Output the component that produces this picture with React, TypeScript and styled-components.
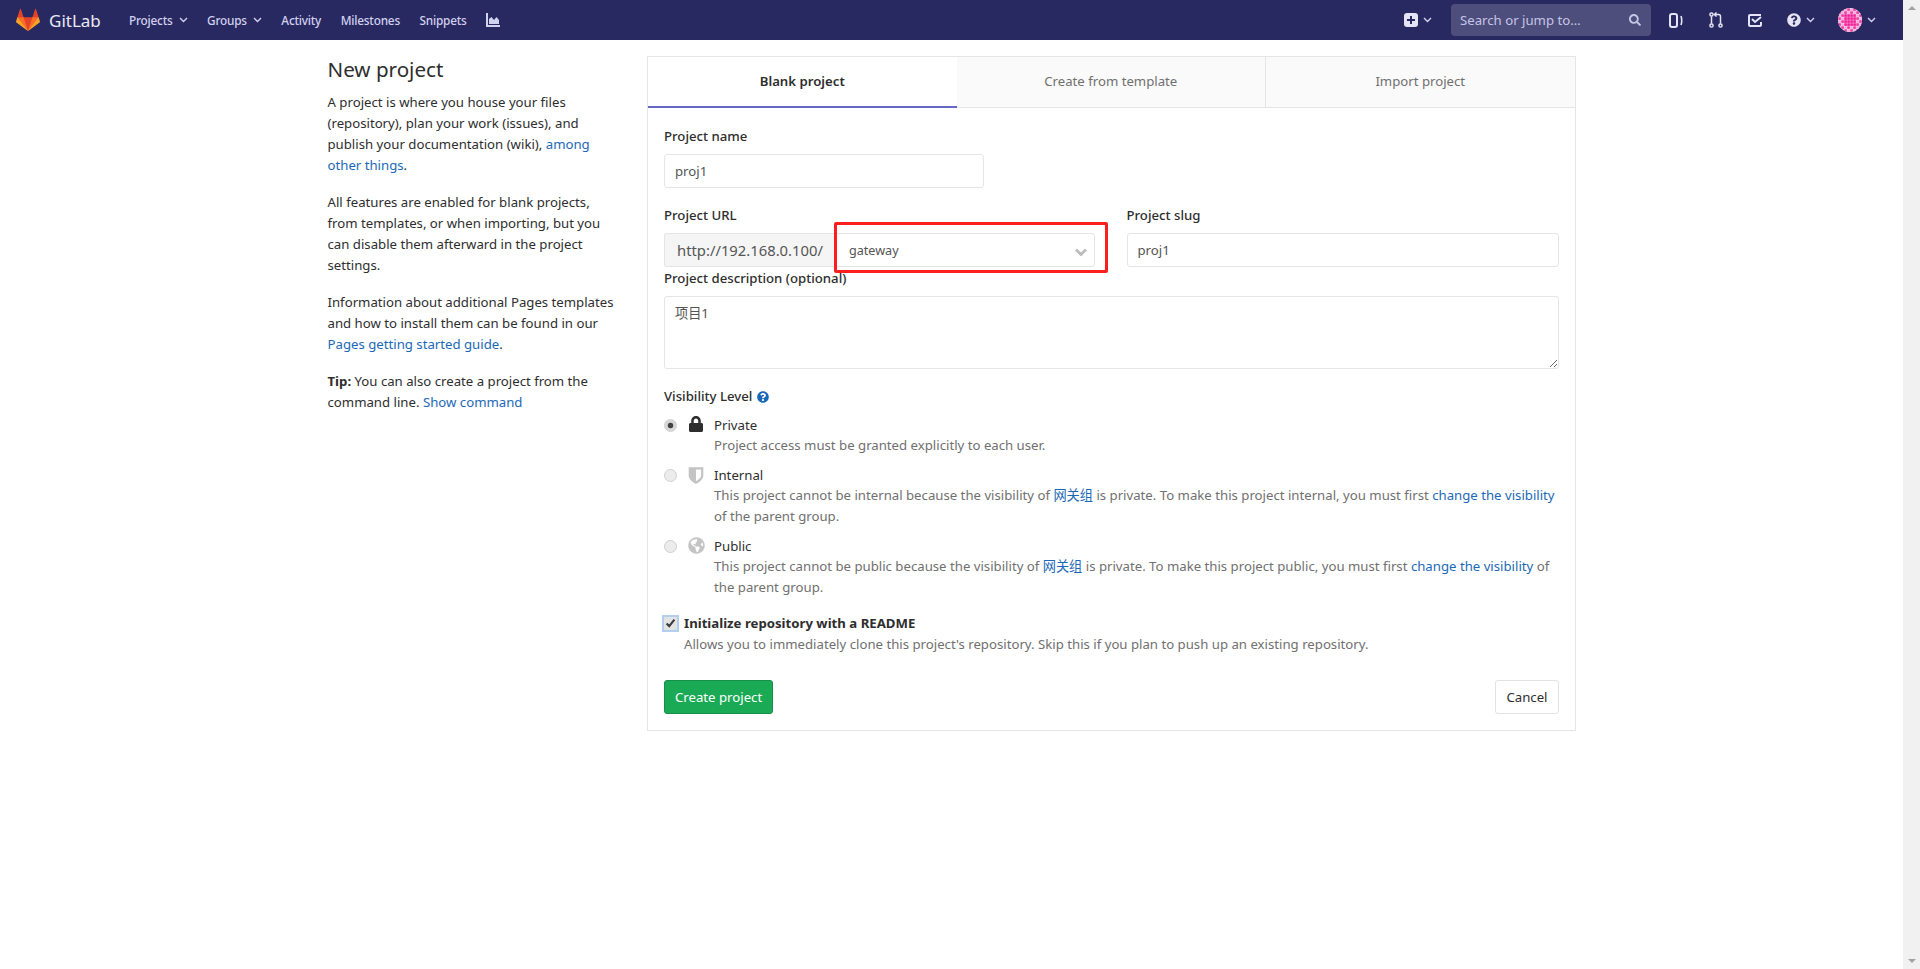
import styled, { createGlobalStyle } from "styled-components";
import { FaGlobeAmericas, FaLock, FaQuestionCircle, FaSearch } from "react-icons/fa";

const GlobalStyle = createGlobalStyle`
    html, body {
        margin: 0;
        padding: 0;
        background: #fff;
    }
    body {
        font-family: "Noto Sans", "Noto Sans CJK SC", sans-serif;
        font-size: 13.2px;
        color: #2e2e2e;
    }
    * {
        box-sizing: border-box;
    }
`;

const Shell = styled.div`
    display: flex;
    height: 969px;
    overflow: hidden;
`;

const Main = styled.div`
    flex: 1;
    min-width: 0;
`;

const ScrollRail = styled.div`
    width: 17px;
    background: #f1f1f1;
    display: flex;
    flex-direction: column;
    justify-content: space-between;
    align-items: center;
    padding: 6px 0;
`;

const ArrowUp = styled.div`
    width: 0;
    height: 0;
    border-left: 4px solid transparent;
    border-right: 4px solid transparent;
    border-bottom: 4px solid #a3a3a3;
`;

const ArrowDown = styled.div`
    width: 0;
    height: 0;
    border-left: 4px solid transparent;
    border-right: 4px solid transparent;
    border-top: 4px solid #a3a3a3;
`;

const Navbar = styled.header`
    height: 40px;
    background: #292961;
    display: flex;
    align-items: center;
    padding: 0 15px 0 16px;
    color: #d1d1f0;
    font-size: 11.8px;
    font-weight: 500;
`;

const Brand = styled.div`
    display: flex;
    align-items: center;
    gap: 9px;
    width: 113px;
    color: #e8e8f6;
    font-size: 17px;
    font-weight: 400;
    svg {
        width: 24px;
        height: 24px;
    }
`;

const NavLinks = styled.nav`
    display: flex;
    align-items: center;
    gap: 19.5px;
`;

const NavLink = styled.a`
    display: flex;
    align-items: center;
    gap: 6px;
    letter-spacing: -0.2px;
`;

const NavRight = styled.div`
    margin-left: auto;
    display: flex;
    align-items: center;
`;

const IconButton = styled.div<{ $width: number }>`
    width: ${(p) => p.$width}px;
    display: flex;
    align-items: center;
    gap: 5px;
`;

const SearchBox = styled.div`
    width: 200px;
    height: 32px;
    margin: 0 18px 0 15px;
    padding: 0 10px 0 9px;
    border-radius: 4px;
    background: #4e4e7d;
    display: flex;
    align-items: center;
    justify-content: space-between;
    color: #c5c5e6;
    font-size: 13.2px;
    font-weight: 400;
    svg {
        width: 12px;
        height: 12px;
    }
`;

const Avatar = styled.svg`
    width: 24px;
    height: 24px;
    border-radius: 50%;
`;

const Layout = styled.div`
    width: 1280px;
    margin: 16px auto 0;
    padding: 0 16px;
    display: flex;
    gap: 31.5px;
`;

const Sidebar = styled.aside`
    width: 288px;
    flex: none;
`;

const Title = styled.h4`
    margin: 0 0 9px;
    font-size: 20.6px;
    line-height: 27px;
    font-weight: 400;
`;

const Paragraph = styled.p`
    margin: 0 0 16px;
    line-height: 21px;
`;

const Link = styled.a`
    color: #1b69b6;
`;

const Panel = styled.section`
    flex: 1;
    min-width: 0;
    border: 1px solid #e5e5e5;
    height: 675px;
`;

const Tabs = styled.div`
    display: grid;
    grid-template-columns: 308.5px 309.5px 1fr;
    height: 51px;
`;

const Tab = styled.div<{ $active?: boolean }>`
    display: flex;
    align-items: center;
    justify-content: center;
    padding-bottom: ${(p) => (p.$active ? "1px" : "2px")};
    background: ${(p) => (p.$active ? "#fff" : "#fafafa")};
    color: ${(p) => (p.$active ? "#2e2e2e" : "#707070")};
    font-weight: ${(p) => (p.$active ? 600 : 400)};
    border-bottom: ${(p) => (p.$active ? "2px solid #6666c4" : "1px solid #e5e5e5")};
    border-right: ${(p) => (p.$active ? "none" : "1px solid #e5e5e5")};
    &:last-child {
        border-right: none;
    }
`;

const Body = styled.form`
    padding: 17px 16px 16px;
`;

const FieldLabel = styled.label`
    display: block;
    padding-top: 1px;
    margin-bottom: 7px;
    line-height: 21px;
    font-weight: 500;
    color: #2e2e2e;
`;

const TextInput = styled.input<{ $width?: string }>`
    display: block;
    width: ${(p) => p.$width ?? "100%"};
    height: 34px;
    padding: 0 10px;
    border: 1px solid #e5e5e5;
    border-radius: 3px;
    background: #fff;
    font: inherit;
    color: #555;
`;

const NameGroup = styled.div`
    margin-bottom: 16px;
`;

const UrlRow = styled.div`
    display: grid;
    grid-template-columns: 431px 1fr;
    gap: 31.5px;
`;

const UrlGroup = styled.div`
    display: flex;
`;

const Addon = styled.div`
    width: 171px;
    height: 34px;
    padding-left: 12px;
    display: flex;
    align-items: center;
    border: 1px solid #e5e5e5;
    border-right: none;
    border-radius: 3px 0 0 3px;
    background: #f5f5f5;
    color: #555;
    font-size: 14.8px;
    white-space: nowrap;
`;

const SelectWrap = styled.div`
    position: relative;
    flex: 1;
`;

const NamespaceSelect = styled.select`
    display: block;
    width: 100%;
    height: 34px;
    padding: 0 10px 0 13px;
    appearance: none;
    border: 1px solid #e5e5e5;
    border-radius: 0 3px 3px 0;
    background: #fff;
    font: inherit;
    font-size: 12.6px;
    color: #555;
`;

const SelectChevron = styled.svg`
    position: absolute;
    right: 8px;
    top: 15px;
    width: 12px;
    height: 8px;
`;

const RedMark = styled.div`
    position: absolute;
    left: -1px;
    top: -11px;
    width: 274px;
    height: 51px;
    border: 3px solid #ff1e1e;
    border-radius: 2px;
    pointer-events: none;
`;

const DescriptionGroup = styled.div`
    margin-bottom: 17px;
`;

const Description = styled.textarea`
    display: block;
    width: 100%;
    height: 73px;
    padding: 6px 10px;
    border: 1px solid #e5e5e5;
    border-radius: 3px;
    font: inherit;
    color: #555;
    line-height: 21px;
`;

const VisibilityTitle = styled.div`
    display: flex;
    align-items: center;
    gap: 5px;
    line-height: 21px;
    font-weight: 500;
    margin-bottom: 10px;
    svg {
        width: 12px;
        height: 12px;
        color: #1b69b6;
    }
`;

const Option = styled.label`
    display: grid;
    grid-template-columns: 14px 20px 1fr;
    column-gap: 8px;
    margin-bottom: 11px;
`;

const Radio = styled.input<{ $on?: boolean }>`
    appearance: none;
    width: 13px;
    height: 13px;
    margin: 2px 0 0;
    border-radius: 50%;
    border: 1px solid #cfcfcf;
    background: ${(p) => (p.$on ? "radial-gradient(circle, #444 0 2.5px, #d8d8d8 3.2px)" : "#ececec")};
`;

const OptionIcon = styled.div<{ $muted?: boolean; $size: number }>`
    display: flex;
    justify-content: center;
    margin-top: -1px;
    color: ${(p) => (p.$muted ? "#c4c4c4" : "#2e2e2e")};
    svg {
        width: ${(p) => p.$size}px;
        height: ${(p) => p.$size}px;
    }
`;

const OptionName = styled.div`
    margin-top: -1px;
    padding-bottom: 1px;
    line-height: 18px;
    color: #2e2e2e;
`;

const Hint = styled.div`
    line-height: 21px;
    color: #707070;
`;

const ReadmeRow = styled.label`
    display: grid;
    grid-template-columns: 12px 1fr;
    column-gap: 8px;
    margin-top: 15px;
    line-height: 21px;
`;

const Check = styled.input`
    width: 13px;
    height: 13px;
    margin: 4px 0 0;
    box-shadow: 0 0 0 2px #b3cfee;
    accent-color: #e4e4e4;
`;

const ReadmeName = styled.div`
    font-weight: 700;
    color: #2e2e2e;
`;

const Footer = styled.div`
    display: flex;
    justify-content: space-between;
    margin-top: 25px;
`;

const Button = styled.button<{ $primary?: boolean }>`
    height: 34px;
    padding: 0 10px;
    border-radius: 3px;
    border: 1px solid ${(p) => (p.$primary ? "#168f48" : "#e3e3e3")};
    background: ${(p) => (p.$primary ? "#1aaa55" : "#fff")};
    color: ${(p) => (p.$primary ? "#fff" : "#2e2e2e")};
    font: inherit;
`;

const Chevron = () => (
    <svg width="9" height="6" viewBox="0 0 9 6" fill="none" stroke="currentColor" strokeWidth="1.4">
        <path d="M1 1l3.500 3.500L8 1" />
    </svg>
);

const avatarCells = [0, 1, 2, 3, 4, 5, 6, 7];

// rough identicon: solid pink middle, lattice towards the rim
const avatarColor = (row: number, col: number) => {
    const middle = row > 1 && row < 6 && col > 1 && col < 6;
    if (middle) return "#f01f97";
    return (row + col) % 2 === 0 ? "#f7a8d8" : "#ee3aa2";
};

export default function App() {
    return (
        <Shell>
            <GlobalStyle />
            <Main>
                <Navbar>
                    <Brand>
                        <svg viewBox="0 0 36 36">
                            <path fill="#e24329" d="M18 34.38 3 14h30z" />
                            <path fill="#e24329" d="M2 14l9.38 9v-9l-4-12.28c-.205-.632-1.176-.632-1.38 0z" />
                            <path fill="#e24329" d="M34 14l-9.38 9v-9l4-12.28c.205-.632 1.176-.632 1.38 0z" />
                            <path fill="#fc6d26" d="M18 34.38 11.38 14H2l4 11z" />
                            <path fill="#fc6d26" d="M18 34.38 24.62 14H34l-4 11z" />
                            <path fill="#fca326" d="M2 14L.1 20.16c-.18.565 0 1.2.5 1.56l17.42 12.66z" />
                            <path fill="#fca326" d="M34 14l1.9 6.16c.18.565 0 1.2-.5 1.56L18 34.38z" />
                        </svg>
                        GitLab
                    </Brand>
                    <NavLinks>
                        <NavLink>Projects <Chevron /></NavLink>
                        <NavLink>Groups <Chevron /></NavLink>
                        <NavLink>Activity</NavLink>
                        <NavLink>Milestones</NavLink>
                        <NavLink>Snippets</NavLink>
                        <NavLink>
                            <svg width="14" height="14" viewBox="0 0 14 14" fill="currentColor">
                                <path d="M0 0h2v12h12v2H0z" />
                                <path d="M3 11V6l2.500-2L8 7l2.500-3L13 7v4z" />
                            </svg>
                        </NavLink>
                    </NavLinks>
                    <NavRight>
                        <IconButton $width={32}>
                            <svg width="14" height="14" viewBox="0 0 14 14">
                                <rect width="14" height="14" rx="3" fill="#e4e4f6" />
                                <path d="M6 3h2v3h3v2H8v3H6V8H3V6h3z" fill="#292961" />
                            </svg>
                            <Chevron />
                        </IconButton>
                        <SearchBox>
                            Search or jump to…
                            <FaSearch />
                        </SearchBox>
                        <IconButton $width={40}>
                            <svg width="14" height="15" viewBox="0 0 14 15" fill="none" stroke="#e4e4f6" strokeWidth="2">
                                <rect x="1" y="1" width="7" height="13" rx="2" />
                                <path d="M12 3c1 3 1 6 0 9" strokeWidth="1.6" />
                            </svg>
                        </IconButton>
                        <IconButton $width={39}>
                            <svg width="14" height="16" viewBox="0 0 14 16" fill="none" stroke="#e4e4f6" strokeWidth="1.5">
                                <circle cx="2.500" cy="2.500" r="1.600" />
                                <circle cx="2.500" cy="13.500" r="1.600" />
                                <circle cx="11.500" cy="13.500" r="1.600" />
                                <path d="M2.500 4.200v7.600M11.500 11.800V4.500c0-1-.7-2-2-2H6" />
                                <path d="M7.500.5 5.500 2.500l2 2" />
                            </svg>
                        </IconButton>
                        <IconButton $width={39}>
                            <svg width="14" height="14" viewBox="0 0 14 14" fill="none" stroke="#e4e4f6" strokeWidth="2">
                                <path d="M13 2H2a1 1 0 0 0-1 1v9a1 1 0 0 0 1 1h10a1 1 0 0 0 1-1V9" />
                                <path d="M4 6l3 3 6-5" />
                            </svg>
                        </IconButton>
                        <IconButton $width={51}>
                            <FaQuestionCircle size={14} color="#e4e4f6" />
                            <Chevron />
                        </IconButton>
                        <IconButton $width={50}>
                            <Avatar viewBox="0 0 24 24">
                                <rect width="24" height="24" fill="#fff" />
                                {avatarCells.map((row) =>
                                    avatarCells.map((col) => (
                                        <rect
                                            key={`${row}-${col}`}
                                            x={col * 3 + 0.2}
                                            y={row * 3 + 0.2}
                                            width="2.7"
                                            height="2.7"
                                            fill={avatarColor(row, col)}
                                        />
                                    ))
                                )}
                            </Avatar>
                            <Chevron />
                        </IconButton>
                    </NavRight>
                </Navbar>
                <Layout>
                    <Sidebar>
                        <Title>New project</Title>
                        <Paragraph>
                            A project is where you house your files (repository), plan your work (issues), and publish your documentation (wiki), <Link>among other things</Link>.
                        </Paragraph>
                        <Paragraph>
                            All features are enabled for blank projects, from templates, or when importing, but you can disable them afterward in the project settings.
                        </Paragraph>
                        <Paragraph>
                            Information about additional Pages templates and how to install them can be found in our <Link>Pages getting started guide</Link>.
                        </Paragraph>
                        <Paragraph>
                            <strong>Tip:</strong> You can also create a project from the command line. <Link>Show command</Link>
                        </Paragraph>
                    </Sidebar>
                    <Panel>
                        <Tabs>
                            <Tab $active>Blank project</Tab>
                            <Tab>Create from template</Tab>
                            <Tab>Import project</Tab>
                        </Tabs>
                        <Body>
                            <NameGroup>
                                <FieldLabel>Project name</FieldLabel>
                                <TextInput $width="320px" defaultValue="proj1" />
                            </NameGroup>
                            <UrlRow>
                                <div>
                                    <FieldLabel>Project URL</FieldLabel>
                                    <UrlGroup>
                                        <Addon>http://192.168.0.100/</Addon>
                                        <SelectWrap>
                                            <NamespaceSelect defaultValue="gateway">
                                                <option value="gateway">gateway</option>
                                            </NamespaceSelect>
                                            <SelectChevron viewBox="0 0 12 8" fill="none" stroke="#bdbdbd" strokeWidth="2.8">
                                                <path d="M1 1.500l5 5 5-5" />
                                            </SelectChevron>
                                            <RedMark />
                                        </SelectWrap>
                                    </UrlGroup>
                                </div>
                                <div>
                                    <FieldLabel>Project slug</FieldLabel>
                                    <TextInput defaultValue="proj1" />
                                </div>
                            </UrlRow>
                            <DescriptionGroup>
                                <FieldLabel>Project description (optional)</FieldLabel>
                                <Description defaultValue="项目1" />
                            </DescriptionGroup>
                            <VisibilityTitle>
                                Visibility Level <FaQuestionCircle />
                            </VisibilityTitle>
                            <Option>
                                <Radio type="radio" name="visibility" $on defaultChecked />
                                <OptionIcon $size={16}><FaLock /></OptionIcon>
                                <div>
                                    <OptionName>Private</OptionName>
                                    <Hint>Project access must be granted explicitly to each user.</Hint>
                                </div>
                            </Option>
                            <Option>
                                <Radio type="radio" name="visibility" disabled />
                                <OptionIcon $muted $size={18}>
                                    <svg viewBox="0 0 16 16" fill="currentColor">
                                        <path d="M1.500 1h13v7.500c0 3.500-3.500 6-6.500 7.500C5 14.500 1.500 12 1.500 8.500zM8 3v10.500c2-1.200 4.500-3 4.500-5V3z" />
                                    </svg>
                                </OptionIcon>
                                <div>
                                    <OptionName>Internal</OptionName>
                                    <Hint>
                                        This project cannot be internal because the visibility of <Link>网关组</Link> is private. To make this project internal, you must first <Link>change the visibility</Link> of the parent group.
                                    </Hint>
                                </div>
                            </Option>
                            <Option>
                                <Radio type="radio" name="visibility" disabled />
                                <OptionIcon $muted $size={17}><FaGlobeAmericas /></OptionIcon>
                                <div>
                                    <OptionName>Public</OptionName>
                                    <Hint>
                                        This project cannot be public because the visibility of <Link>网关组</Link> is private. To make this project public, you must first <Link>change the visibility</Link> of the parent group.
                                    </Hint>
                                </div>
                            </Option>
                            <ReadmeRow>
                                <Check type="checkbox" defaultChecked />
                                <ReadmeName>Initialize repository with a README</ReadmeName>
                                <span />
                                <Hint>Allows you to immediately clone this project's repository. Skip this if you plan to push up an existing repository.</Hint>
                            </ReadmeRow>
                            <Footer>
                                <Button type="button" $primary>Create project</Button>
                                <Button type="button">Cancel</Button>
                            </Footer>
                        </Body>
                    </Panel>
                </Layout>
            </Main>
            <ScrollRail>
                <ArrowUp />
                <ArrowDown />
            </ScrollRail>
        </Shell>
    );
}
